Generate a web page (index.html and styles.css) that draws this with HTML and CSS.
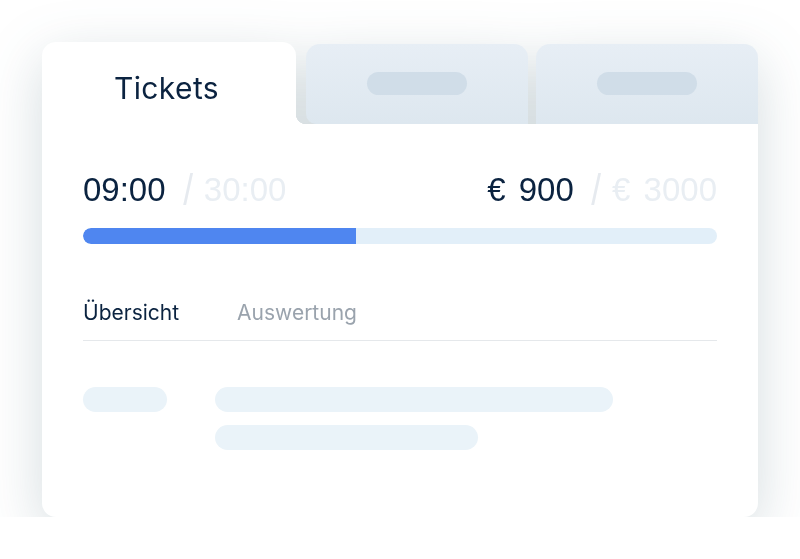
FILE: index.html
```html
<!DOCTYPE html>
<html lang="de">
<head>
    <meta charset="UTF-8">
    <meta name="viewport" content="width=device-width, initial-scale=1.0">
    <title>Tickets</title>
    <link rel="stylesheet" href="styles.css">
</head>
<body>
    <div class="card">
        <div class="tabs">
            <div class="tab tab-active">Tickets</div>
            <div class="tab tab-muted"><span class="tab-pill"></span></div>
            <div class="tab tab-muted tab-last"><span class="tab-pill"></span></div>
        </div>
        <div class="panel">
            <div class="stats">
                <div class="stat">
                    <span class="stat-value">09:00</span>
                    <span class="stat-slash">/</span>
                    <span class="stat-total">30:00</span>
                </div>
                <div class="stat stat-money">
                    <span class="stat-value">€ 900</span>
                    <span class="stat-slash">/</span>
                    <span class="stat-total">€ 3000</span>
                </div>
            </div>
            <div class="progress">
                <div class="progress-fill" style="width: 43%"></div>
            </div>
            <nav class="subtabs">
                <span class="subtab subtab-active">Übersicht</span>
                <span class="subtab">Auswertung</span>
            </nav>
            <div class="skeleton">
                <span class="bone bone-label"></span>
                <div class="bone-lines">
                    <span class="bone bone-long"></span>
                    <span class="bone bone-short"></span>
                </div>
            </div>
        </div>
    </div>
</body>
</html>
```

FILE: styles.css
```css
body {
    margin: 0;
    background-color: #fff;
    font-family: Inter, "Open Sans", sans-serif;
    color: #0b2340;
}
.card {
    width: 716px;
    margin: 42px 0 0 42px;
    filter: drop-shadow(0 16px 28px rgba(40, 80, 95, 0.2));
}
.tabs {
    display: flex;
    align-items: flex-end;
    height: 82px;
}
.tab {
    height: 80px;
    border-radius: 14px 14px 0 0;
    display: flex;
    align-items: center;
    justify-content: center;
}
.tab-active {
    position: relative;
    width: 254px;
    height: 82px;
    background-color: #fff;
    font-size: 30px;
    letter-spacing: 0.4px;
    padding: 10px 5px 0 0;
    box-sizing: border-box;
}
.tab-active::after {
    content: "";
    position: absolute;
    right: -10px;
    bottom: 0;
    width: 10px;
    height: 10px;
    background: radial-gradient(circle at 100% 0, transparent 10px, #fff 10.5px);
}
.tab-muted {
    width: 222px;
    margin-left: 10px;
    background: linear-gradient(180deg, #e7eef5 0%, #dde7ef 100%);
    border-radius: 14px 14px 0 10px;
}
.tab-last {
    margin-left: 8px;
    border-radius: 14px 14px 0 0;
}
.tab-pill {
    width: 100px;
    height: 23px;
    margin-top: -2px;
    border-radius: 12px;
    background-color: #d0dde8;
}
.panel {
    background-color: #fff;
    border-radius: 0 0 14px 14px;
    padding: 46px 41px 67px;
}
.stats {
    display: flex;
    justify-content: space-between;
    align-items: center;
    font-family: "Liberation Sans", Arial, sans-serif;
    font-size: 33px;
    height: 40px;
}
.stat {
    display: flex;
    align-items: center;
}
.stat-money {
    word-spacing: 4px;
}
.stat-slash {
    font-size: 44px;
    font-weight: 300;
    color: #e6eaef;
    margin: 0 10px 0 16px;
    transform: scaleX(0.8);
}
.stat-total {
    color: #e9eef3;
}
.progress {
    height: 16px;
    margin-top: 18px;
    border-radius: 8px;
    background-color: #e2eff9;
    overflow: hidden;
}
.progress-fill {
    height: 100%;
    background-color: #4f86f0;
    border-radius: 8px 0 0 8px;
}
.subtabs {
    display: flex;
    gap: 58px;
    margin-top: 56px;
    padding-bottom: 15px;
    border-bottom: 1px solid #e5e8eb;
    font-size: 21px;
}
.subtab {
    color: #9aa3ad;
}
.subtab-active {
    color: #0b2340;
}
.skeleton {
    display: flex;
    gap: 48px;
    margin-top: 46px;
}
.bone {
    display: block;
    height: 25px;
    border-radius: 13px;
    background-color: #eaf3f9;
}
.bone-label {
    width: 84px;
}
.bone-lines {
    display: flex;
    flex-direction: column;
    gap: 13px;
}
.bone-long {
    width: 398px;
}
.bone-short {
    width: 263px;
}
```
